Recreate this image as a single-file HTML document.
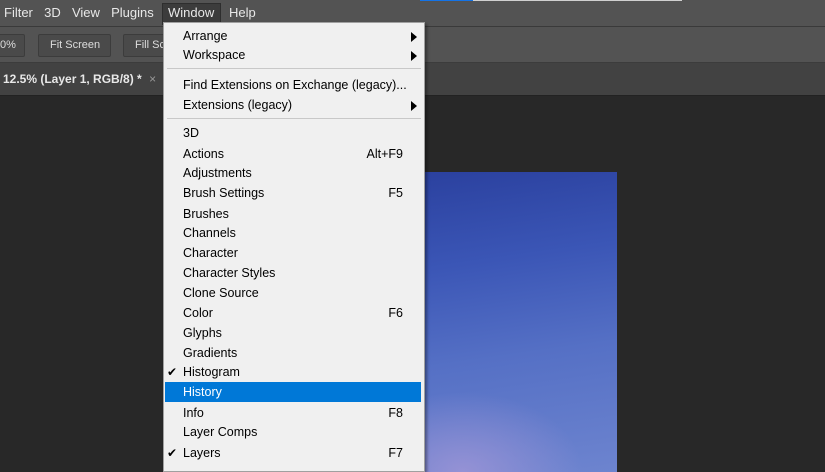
<!DOCTYPE html>
<html><head><style>
*{margin:0;padding:0;box-sizing:border-box}
body{width:825px;height:461px;overflow:hidden;background:#282828;font-family:"Liberation Sans",sans-serif;position:relative}
.bar{position:absolute;left:0;width:825px}
.t{position:absolute;white-space:nowrap}
.menu{position:absolute;left:163px;top:22px;width:262px;height:450px;background:#f0f0f0;border:1px solid #a0a0a0;box-shadow:2px 2px 3px rgba(0,0,0,.4)}
.it{position:absolute;left:0;width:260px;height:20px;font-size:12.5px;color:#000;line-height:20px}
.it span.l{position:absolute;left:19px}
.it span.r{position:absolute;right:21px}
.it span.a{position:absolute;right:7px;top:6px;width:0;height:0;border-left:6px solid #000;border-top:5px solid transparent;border-bottom:5px solid transparent}
.it span.c{position:absolute;left:3px;font-size:12px}
.sep{position:absolute;left:3px;width:254px;height:1px;background:#c8c8c8}
</style></head><body>
<div class="bar" style="top:0;height:26px;background:#535353"></div>
<div style="position:absolute;left:420px;top:0;width:53px;height:1px;background:#1473e6"></div>
<div style="position:absolute;left:473px;top:0;width:209px;height:1px;background:#d0d0d0"></div>
<div class="bar" style="top:26px;height:1px;background:#3a3a3a"></div>
<div class="bar" style="top:27px;height:36px;background:#535353"></div>
<div class="bar" style="top:62px;height:1px;background:#3c3c3c"></div>
<div class="bar" style="top:63px;height:32px;background:#424242"></div>
<div class="bar" style="top:95px;height:1px;background:#222"></div>
<div style="position:absolute;left:162px;top:3px;width:59px;height:22px;background:#3c3c3c;border:1px solid #2e2e2e"></div>
<div class="t" style="left:4px;top:5px;font-size:13px;color:#e8e8e8;word-spacing:2px">Filter&nbsp; 3D&nbsp; View&nbsp; Plugins</div>
<div class="t" style="left:168px;top:5px;font-size:13px;color:#e8e8e8">Window</div>
<div class="t" style="left:229px;top:5px;font-size:13px;color:#e8e8e8">Help</div>
<div style="position:absolute;left:-5px;top:34px;width:30px;height:23px;background:#4a4a4a;border:1px solid #3c3c3c;border-radius:2px"></div>
<div class="t" style="left:0;top:39px;font-size:11px;color:#ddd">0%</div>
<div style="position:absolute;left:38px;top:34px;width:73px;height:23px;background:#4a4a4a;border:1px solid #3c3c3c;border-radius:2px"></div>
<div class="t" style="left:50px;top:39px;font-size:11px;color:#ddd">Fit Screen</div>
<div style="position:absolute;left:123px;top:34px;width:60px;height:23px;background:#4a4a4a;border:1px solid #3c3c3c;border-radius:2px"></div>
<div class="t" style="left:135px;top:39px;font-size:11px;color:#ddd">Fill Sc</div>
<div class="t" style="left:3px;top:72px;font-size:12px;font-weight:bold;color:#e8e8e8">12.5% (Layer 1, RGB/8) * <span style="font-weight:normal;color:#999;margin-left:4px">×</span></div>
<div style="position:absolute;left:424px;top:172px;width:193px;height:300px;background:radial-gradient(ellipse 120px 80px at 20% 100%,rgba(160,150,215,.8) 0%,rgba(140,140,210,0) 100%),linear-gradient(172deg,#2b419f 0%,#3b56b6 30%,#5570c5 60%,#6d84cf 100%)"></div>
<div class="menu">
<div class="it" style="top:3px"><span class="l">Arrange</span><span class="a"></span></div>
<div class="it" style="top:22px"><span class="l">Workspace</span><span class="a"></span></div>
<div class="sep" style="top:45px"></div>
<div class="it" style="top:52px"><span class="l">Find Extensions on Exchange (legacy)...</span></div>
<div class="it" style="top:72px"><span class="l">Extensions (legacy)</span><span class="a"></span></div>
<div class="sep" style="top:95px"></div>
<div class="it" style="top:100px"><span class="l">3D</span></div>
<div class="it" style="top:121px"><span class="l">Actions</span><span class="r">Alt+F9</span></div>
<div class="it" style="top:140px"><span class="l">Adjustments</span></div>
<div class="it" style="top:160px"><span class="l">Brush Settings</span><span class="r">F5</span></div>
<div class="it" style="top:181px"><span class="l">Brushes</span></div>
<div class="it" style="top:200px"><span class="l">Channels</span></div>
<div class="it" style="top:220px"><span class="l">Character</span></div>
<div class="it" style="top:240px"><span class="l">Character Styles</span></div>
<div class="it" style="top:260px"><span class="l">Clone Source</span></div>
<div class="it" style="top:280px"><span class="l">Color</span><span class="r">F6</span></div>
<div class="it" style="top:300px"><span class="l">Glyphs</span></div>
<div class="it" style="top:320px"><span class="l">Gradients</span></div>
<div class="it" style="top:339px"><span class="c">✔</span><span class="l">Histogram</span></div>
<div class="it" style="top:359px;left:1px;width:256px;background:#0078d7;color:#fff"><span class="l" style="left:18px">History</span></div>
<div class="it" style="top:380px"><span class="l">Info</span><span class="r">F8</span></div>
<div class="it" style="top:399px"><span class="l">Layer Comps</span></div>
<div class="it" style="top:420px"><span class="c">✔</span><span class="l">Layers</span><span class="r">F7</span></div>
</div>
</body></html>
